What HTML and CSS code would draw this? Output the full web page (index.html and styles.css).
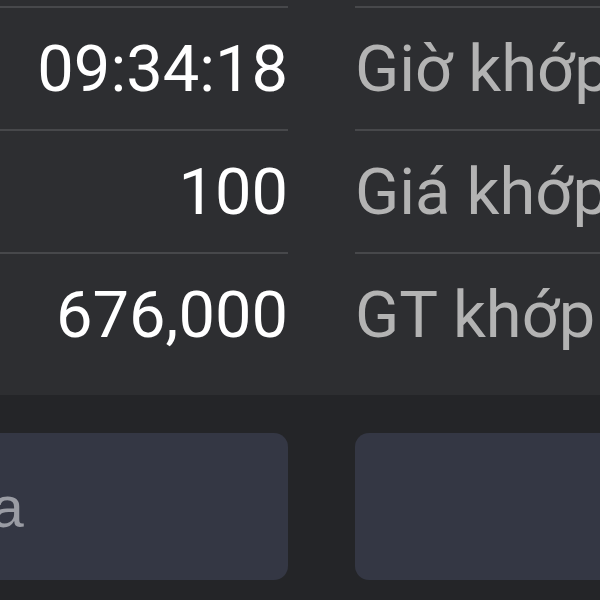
FILE: index.html
```html
<!DOCTYPE html>
<html lang="vi">
<head>
    <meta charset="UTF-8">
    <meta name="viewport" content="width=device-width, initial-scale=1.0">
    <title>Chi tiết lệnh</title>
    <link rel="stylesheet" href="styles.css">
</head>
<body>

<div class="screen">
    <!-- Order match details -->
    <div class="detail-panel">
        <div class="detail-row">
            <div class="detail-value">09:34:18</div>
            <div class="detail-label">Giờ khớp</div>
        </div>
        <div class="detail-row">
            <div class="detail-value">100</div>
            <div class="detail-label">Giá khớp</div>
        </div>
        <div class="detail-row">
            <div class="detail-value">676,000</div>
            <div class="detail-label">GT khớp</div>
        </div>
    </div>

    <!-- Action buttons -->
    <div class="actions">
        <button class="action-btn action-left">Sửa</button>
        <button class="action-btn action-right">Hủy</button>
    </div>
</div>

</body>
</html>
```

FILE: styles.css
```css
body {
    margin: 0;
    padding: 0;
    background-color: #242528;
    font-family: Roboto, "Noto Sans", sans-serif;
    overflow: hidden;
}
.screen {
    width: 600px;
    height: 600px;
    overflow: hidden;
}
.detail-panel {
    background-color: #2d2e31;
    padding: 6px 0 20px 0;
}
.detail-row {
    display: grid;
    grid-template-columns: 288px 1fr;
    column-gap: 67px;
    height: 123px;
}
.detail-value,
.detail-label {
    display: flex;
    align-items: center;
    border-top: 2px solid #47484b;
    font-size: 65px;
    white-space: nowrap;
    overflow: hidden;
}
.detail-value {
    justify-content: flex-end;
    color: #ffffff;
}
.detail-label {
    color: #b3b3b3;
}
.actions {
    display: grid;
    grid-template-columns: 288px 1fr;
    column-gap: 67px;
    padding-top: 38px;
}
.action-btn {
    height: 147px;
    border: none;
    border-radius: 14px;
    background-color: #343744;
    color: #9a9ca4;
    font-family: "Liberation Sans", Arial, sans-serif;
    font-size: 58px;
    cursor: pointer;
}
.action-left {
    margin-left: -350px;
    text-align: center;
}
.action-right {
    margin-right: -600px;
}
```
